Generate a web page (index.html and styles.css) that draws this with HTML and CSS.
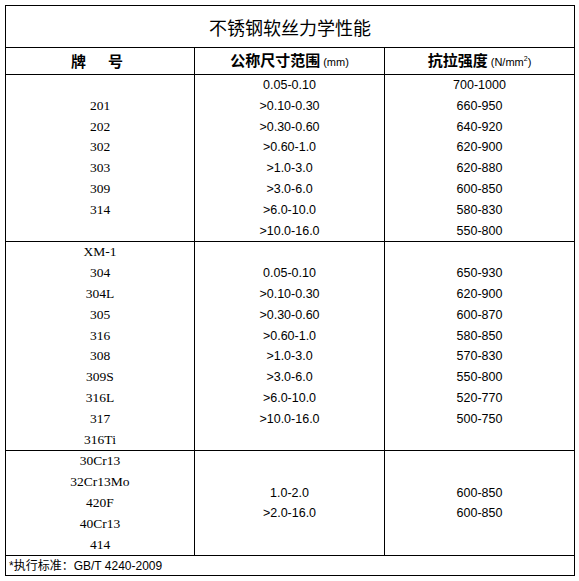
FILE: index.html
```html
<!DOCTYPE html>
<html lang="zh">
<head>
<meta charset="utf-8">
<title>不锈钢软丝力学性能</title>
<link rel="stylesheet" href="styles.css">
</head>
<body>
<table class="spec">
  <colgroup>
    <col class="c1">
    <col class="c2">
    <col class="c3">
  </colgroup>
  <tr>
    <td class="title" colspan="3">不锈钢软丝力学性能</td>
  </tr>
  <tr class="head">
    <td class="h1"><span class="gap">牌</span>号</td>
    <td>公称尺寸范围<span class="unit">(mm)</span></td>
    <td>抗拉强度<span class="unit">(N/mm<sup>2</sup>)</span></td>
  </tr>
  <tr class="grp g8">
    <td class="grade">201<br>202<br>302<br>303<br>309<br>314</td>
    <td class="num">0.05-0.10<br>&gt;0.10-0.30<br>&gt;0.30-0.60<br>&gt;0.60-1.0<br>&gt;1.0-3.0<br>&gt;3.0-6.0<br>&gt;6.0-10.0<br>&gt;10.0-16.0</td>
    <td class="num">700-1000<br>660-950<br>640-920<br>620-900<br>620-880<br>600-850<br>580-830<br>550-800</td>
  </tr>
  <tr class="grp g10">
    <td class="grade">XM-1<br>304<br>304L<br>305<br>316<br>308<br>309S<br>316L<br>317<br>316Ti</td>
    <td class="num">0.05-0.10<br>&gt;0.10-0.30<br>&gt;0.30-0.60<br>&gt;0.60-1.0<br>&gt;1.0-3.0<br>&gt;3.0-6.0<br>&gt;6.0-10.0<br>&gt;10.0-16.0</td>
    <td class="num">650-930<br>620-900<br>600-870<br>580-850<br>570-830<br>550-800<br>520-770<br>500-750</td>
  </tr>
  <tr class="grp g5">
    <td class="grade">30Cr13<br>32Cr13Mo<br>420F<br>40Cr13<br>414</td>
    <td class="num">1.0-2.0<br>&gt;2.0-16.0</td>
    <td class="num">600-850<br>600-850</td>
  </tr>
  <tr>
    <td class="foot" colspan="3">*执行标准：GB/T 4240-2009</td>
  </tr>
</table>
</body>
</html>
```

FILE: styles.css
```css
html, body {
  margin: 0;
  padding: 0;
  background: #ffffff;
}

body {
  padding: 5px 0 0 5px;
  color: #000000;
  font-family: "Liberation Sans", "Noto Sans CJK SC", sans-serif;
}

.spec {
  border-collapse: collapse;
  table-layout: fixed;
  width: 569px;
}

.c1 { width: 189px; }
.c2 { width: 190px; }
.c3 { width: 190px; }

.spec td {
  border: 1px solid #000000;
  padding: 0;
  text-align: center;
  vertical-align: middle;
}

.spec .title {
  height: 41px;
  font-family: "Noto Sans CJK SC", sans-serif;
  font-size: 18px;
  font-weight: 400;
  line-height: 20px;
}

.spec .head td {
  height: 26px;
  font-family: "Noto Sans CJK SC", sans-serif;
  font-size: 15px;
  font-weight: 700;
  line-height: 18px;
}

.spec .head .h1 {
  padding-right: 6px;
}

.gap {
  margin-right: 22px;
}

.unit {
  font-family: "Liberation Sans", sans-serif;
  font-size: 11px;
  font-weight: 400;
  margin-left: 3px;
}

.unit sup {
  font-size: 7px;
  vertical-align: 5px;
  line-height: 0;
}

.spec .grp td {
  line-height: 20.8px;
}

.spec .g8 td { height: 166px; }
.spec .g10 td { height: 208px; }
.spec .g5 td { height: 104px; }

.spec .grade {
  font-family: "Liberation Serif", serif;
  font-size: 13.5px;
}

.spec .num {
  font-family: "Liberation Sans", sans-serif;
  font-size: 12.5px;
}

.spec .foot {
  height: 19px;
  text-align: left;
  padding-left: 3px;
  font-family: "Liberation Sans", "Noto Sans CJK SC", sans-serif;
  font-size: 12px;
  line-height: 16px;
}
```
